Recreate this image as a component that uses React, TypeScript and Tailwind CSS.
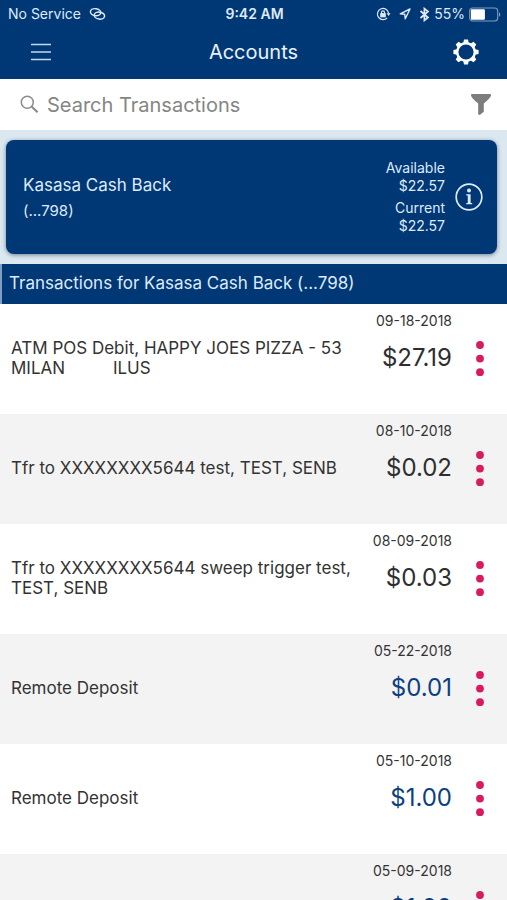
import React, { useState } from 'react';

type Transaction = {
  id: number;
  description: string;
  date: string;
  amount: string;
  credit: boolean;
};

const transactions: Transaction[] = [
  { id: 1, description: 'ATM POS Debit, HAPPY JOES PIZZA - 53\nMILAN          ILUS', date: '09-18-2018', amount: '$27.19', credit: false },
  { id: 2, description: 'Tfr to XXXXXXXX5644 test, TEST, SENB', date: '08-10-2018', amount: '$0.02', credit: false },
  { id: 3, description: 'Tfr to XXXXXXXX5644 sweep trigger test,\nTEST, SENB', date: '08-09-2018', amount: '$0.03', credit: false },
  { id: 4, description: 'Remote Deposit', date: '05-22-2018', amount: '$0.01', credit: true },
  { id: 5, description: 'Remote Deposit', date: '05-10-2018', amount: '$1.00', credit: true },
  { id: 6, description: 'Remote Deposit', date: '05-09-2018', amount: '$1.00', credit: true },
];

const GEAR_ANGLES = [0, 45, 90, 135, 180, 225, 270, 315];

const StatusBar = () => (
  <div className="grid h-7 grid-cols-[1fr_auto_1fr] items-center pl-2 pr-1.5 text-sm text-[#dfeaf8]">
    <div className="flex items-center gap-2">
      <span>No Service</span>
      <svg width="17" height="14" viewBox="0 0 17 14" fill="none" stroke="currentColor" strokeWidth="1.5" aria-hidden="true">
        <ellipse cx="6.6" cy="5.2" rx="5.2" ry="3.5" transform="rotate(8 6.6 5.2)" />
        <ellipse cx="10.4" cy="8.6" rx="5.2" ry="3.5" transform="rotate(8 10.4 8.6)" />
      </svg>
    </div>
    <span className="font-semibold">9:42 AM</span>
    <div className="flex items-center justify-end gap-1">
      <svg width="15" height="14" viewBox="0 0 15 14" fill="none" stroke="currentColor" strokeWidth="1.2" aria-hidden="true">
        <path d="M11.2 10.8A5.6 5.6 0 1 1 12.6 6.5" />
        <path d="M10.6 6.3h4l-2 2.6z" fill="currentColor" stroke="none" />
        <rect x="4.2" y="6.1" width="5.6" height="4.2" fill="currentColor" stroke="none" />
        <path d="M5.5 6.6V5.3a1.5 1.5 0 0 1 3 0v1.3" />
      </svg>
      <svg className="ml-1" width="12" height="12" viewBox="0 0 12 12" fill="none" stroke="currentColor" strokeWidth="1.4" strokeLinejoin="round" aria-hidden="true">
        <path d="M11 1 1.2 5.8l4.6.5.5 4.5z" />
      </svg>
      <svg className="ml-1" width="11" height="15" viewBox="0 0 11 15" fill="none" stroke="currentColor" strokeWidth="1.7" aria-hidden="true">
        <path d="M1.5 4 9 10.5 5.4 13.4V1.6L9 4.5 1.5 11" />
      </svg>
      <span>55%</span>
      <svg width="32" height="15" viewBox="0 0 32 15" fill="none" aria-hidden="true">
        <rect x="0.7" y="1" width="28" height="13" rx="3" stroke="#7e9cc2" strokeWidth="1.1" />
        <rect x="1.9" y="2.2" width="14" height="10.6" rx="1" fill="#fff" />
        <path d="M30 5.2c1.8.8 1.8 3.8 0 4.6z" fill="#7e9cc2" />
      </svg>
    </div>
  </div>
);

const NavBar = () => (
  <div className="grid h-[51px] grid-cols-[1fr_auto_1fr] items-center px-7 pb-1">
    <button type="button" aria-label="Menu" className="w-6 text-[#c3d7ef]">
      <svg className="ml-[3px]" width="20" height="18" viewBox="0 0 20 18" stroke="currentColor" strokeWidth="1.6" aria-hidden="true">
        <path d="M0 1.5h20M0 9h20M0 16.5h20" />
      </svg>
    </button>
    <h1 className="text-xl text-[#e9f1fb]">Accounts</h1>
    <button type="button" aria-label="Settings" className="justify-self-end text-white">
      <svg width="26" height="26" viewBox="0 0 26 26" aria-hidden="true">
        <circle cx="13" cy="13" r="8.8" fill="none" stroke="currentColor" strokeWidth="2.4" />
        {GEAR_ANGLES.map((angle) => (
          <path key={angle} d="M10.2 4.2 11 .4h4l.8 3.8z" fill="currentColor" transform={`rotate(${angle} 13 13)`} />
        ))}
      </svg>
    </button>
  </div>
);

const SearchBar = () => {
  const [query, setQuery] = useState('');

  return (
    <div className="flex h-[51px] shrink-0 items-center bg-white pl-5 pr-4">
      <label htmlFor="search" aria-label="Search Transactions" className="text-[#8b8b8b]">
        <svg width="19" height="19" viewBox="0 0 19 19" fill="none" stroke="currentColor" aria-hidden="true">
          <circle cx="7.3" cy="7.3" r="6" strokeWidth="1.5" />
          <path d="m11.8 11.8 5.8 5.4" strokeWidth="2.2" />
        </svg>
      </label>
      <input
        id="search"
        type="text"
        value={query}
        onChange={(e) => setQuery(e.target.value)}
        placeholder="Search Transactions"
        className="ml-2 min-w-0 flex-1 text-xl text-[#333] outline-none placeholder:text-[#858585]"
      />
      <button type="button" aria-label="Filter" className="text-[#7d7d7d]">
        <svg width="20" height="21" viewBox="0 0 20 21" fill="currentColor" aria-hidden="true">
          <path d="M.8 0h18.4c.6 0 .9.8.8 1.4-.2 1.4-2.2 3.7-7.2 8v8.4l-3.4 2.8c-1 .6-2.2.2-2.2-.8V9.4C2.2 5.1.2 2.8 0 1.4-.1.8.2 0 .8 0z" />
        </svg>
      </button>
    </div>
  );
};

const AccountCard = () => (
  <section className="shrink-0 bg-[#dbe8f0] py-[10px] pl-[6px] pr-[10px]">
    <div className="flex h-[114px] items-center rounded-lg bg-[#003876] pl-[17px] pr-[14px] text-[#dfeaf8] shadow-[0_1px_4px_rgba(0,30,70,0.5)]">
      <div className="flex-1">
        <h2 className="text-[17px] leading-7">Kasasa Cash Back</h2>
        <p className="text-[15px] leading-6">(...798)</p>
      </div>
      <dl className="text-right text-sm leading-[18px]">
        <dt>Available</dt>
        <dd>$22.57</dd>
        <dt className="mt-1">Current</dt>
        <dd>$22.57</dd>
      </dl>
      <button type="button" aria-label="Account details" className="ml-[10px]">
        <svg width="28" height="28" viewBox="0 0 28 28" aria-hidden="true">
          <circle cx="14" cy="14" r="12.8" fill="none" stroke="currentColor" strokeWidth="1.7" />
          <circle cx="14" cy="7.6" r="2" fill="currentColor" />
          <path d="M11.2 11.2h4.4v8.5l1.6.5v1h-6v-1l1.6-.5v-7l-1.6-.5z" fill="currentColor" />
        </svg>
      </button>
    </div>
  </section>
);

const TransactionRow: React.FC<{ transaction: Transaction }> = ({ transaction }) => (
  <li className="flex h-[110px] items-center pl-[11px] pr-[15px] odd:bg-white even:bg-[#f3f3f3]">
    <p className="flex-1 whitespace-pre-wrap pb-0.5 text-[17px] leading-5 text-[#333]">{transaction.description}</p>
    <div className="self-start pt-2 text-right">
      <div className="text-sm leading-[18px] text-[#333]">{transaction.date}</div>
      <div className={`mt-[10px] text-2xl leading-9 ${transaction.credit ? 'text-[#0b3f82]' : 'text-[#2e2e2e]'}`}>
        {transaction.amount}
      </div>
    </div>
    <button type="button" aria-label="Transaction options" className="ml-4 flex w-6 flex-col items-center">
      <svg width="8" height="36" viewBox="0 0 8 36" fill="#d81b60" aria-hidden="true">
        <circle cx="4" cy="4" r="3.9" />
        <circle cx="4" cy="17.6" r="3.9" />
        <circle cx="4" cy="31.2" r="3.9" />
      </svg>
    </button>
  </li>
);

const App = () => {
  return (
    <div className="flex h-screen flex-col overflow-hidden bg-white font-['Inter','Liberation_Sans',sans-serif]">
      <header className="shrink-0 bg-[#003876]">
        <StatusBar />
        <NavBar />
      </header>
      <SearchBar />
      <AccountCard />
      <main className="flex min-h-0 flex-1 flex-col">
        <h2 className="flex h-10 shrink-0 items-center border-l-2 border-[#7f9fc4] bg-[#003876] pl-[7px] text-[17px] text-[#dfeaf8]">
          Transactions for Kasasa Cash Back (...798)
        </h2>
        <ul className="min-h-0 flex-1 overflow-y-auto [scrollbar-width:none]">
          {transactions.map((transaction) => (
            <TransactionRow key={transaction.id} transaction={transaction} />
          ))}
        </ul>
      </main>
    </div>
  );
};

export default App;
